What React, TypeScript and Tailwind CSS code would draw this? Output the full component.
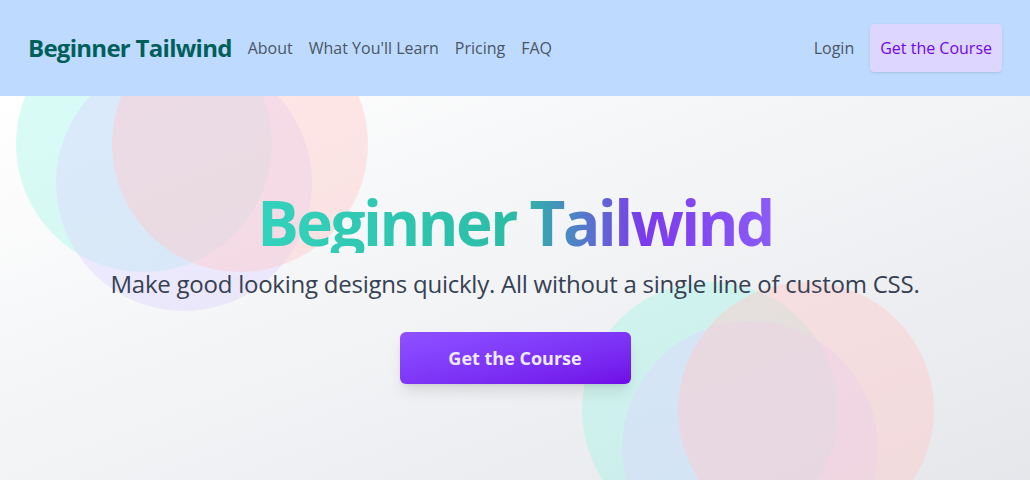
export default function App() {
  return (
    <div className="min-h-screen font-['Open_Sans',sans-serif]">
      <Navbar />
      <Hero />
    </div>
  );
}

function Navbar() {
  const links = ["About", "What You'll Learn", "Pricing", "FAQ"];
  return (
    <nav className="h-24 bg-blue-200 px-7 flex items-center justify-between">
      <div className="flex items-center gap-4">
        <a href="#" className="text-2xl font-bold text-teal-800 tracking-[-0.03em]">
          Beginner Tailwind
        </a>
        <ul className="flex items-center gap-4 text-gray-600">
          {links.map((link) => (
            <li key={link}>
              <a href="#">{link}</a>
            </li>
          ))}
        </ul>
      </div>
      <div className="flex items-center gap-4">
        <a href="#" className="text-gray-600">
          Login
        </a>
        <a
          href="#"
          className="px-2.5 py-3 rounded bg-violet-200 text-violet-700 shadow"
        >
          Get the Course
        </a>
      </div>
    </nav>
  );
}

function Circles({ className }: { className: string }) {
  return (
    <div className={`absolute w-[352px] h-[295px] ${className}`}>
      <div className="absolute left-0 top-0 w-64 h-64 rounded-full bg-teal-200/35"></div>
      <div className="absolute left-10 top-[39px] w-64 h-64 rounded-full bg-violet-200/45"></div>
      <div className="absolute left-24 top-0 w-64 h-64 rounded-full bg-red-200/45"></div>
    </div>
  );
}

function Hero() {
  return (
    <section className="relative overflow-hidden bg-gradient-to-br from-white to-gray-200 h-[384px]">
      <Circles className="left-4 -top-20" />
      <Circles className="left-[582px] top-[186px]" />
      <div className="relative flex flex-col items-center pt-[95px] text-center">
        <h1 className="text-[62px] leading-none font-bold tracking-[-0.04em] bg-[linear-gradient(to_right,#33d3bd_0%,#2bbba5_51%,#7c3aed_75%,#8b5cf6_100%)] bg-clip-text text-transparent">
          Beginner Tailwind
        </h1>
        <p className="mt-[15px] text-2xl text-gray-700 tracking-[-0.01em]">
          Make good looking designs quickly. All without a single line of custom CSS.
        </p>
        <a
          href="#"
          className="mt-8 w-[231px] py-3 rounded-md bg-gradient-to-br from-violet-500 to-violet-700 text-violet-100 text-lg font-bold shadow-lg"
        >
          Get the Course
        </a>
      </div>
    </section>
  );
}
